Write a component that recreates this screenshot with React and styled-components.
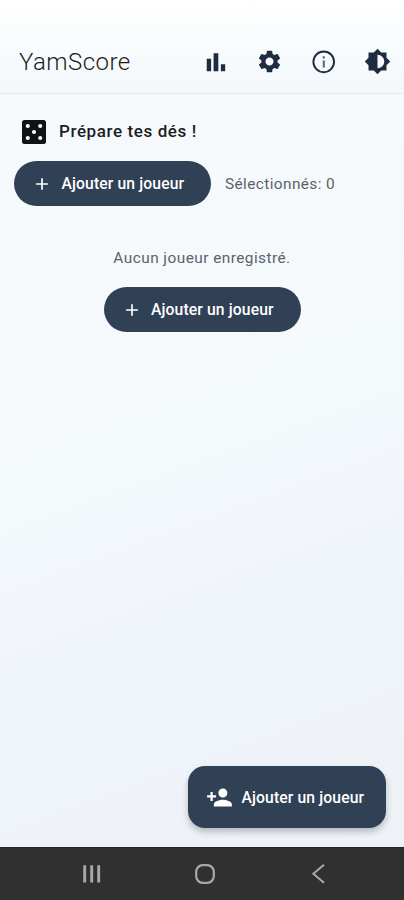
import React from 'react';
import styled, { createGlobalStyle } from 'styled-components';
import { MdAdd, MdBrightness6, MdPersonAdd, MdSettings } from 'react-icons/md';

const COLORS = {
    primary: '#304055',
    icon: '#1e2c40',
    text: '#1b1e23',
    muted: '#5d6267',
    navbar: '#303031',
    navIcon: '#a9a9aa',
};

const App = () => {
    return (
        <Screen>
            <GlobalStyle />
            <Header>
                <Title>YamScore</Title>
                <Actions>
                    <IconButton aria-label='Statistiques'>
                        <BarsIcon />
                    </IconButton>
                    <IconButton aria-label='Paramètres'>
                        <MdSettings />
                    </IconButton>
                    <IconButton aria-label='Informations'>
                        <InfoIcon />
                    </IconButton>
                    <IconButton aria-label='Thème'>
                        <MdBrightness6 />
                    </IconButton>
                </Actions>
            </Header>
            <Main>
                <Heading>
                    <DiceIcon />
                    <HeadingText>Prépare tes dés !</HeadingText>
                </Heading>
                <Toolbar>
                    <AddPlayer />
                    <Selected>Sélectionnés: 0</Selected>
                </Toolbar>
                <Empty>
                    <EmptyText>Aucun joueur enregistré.</EmptyText>
                    <AddPlayer />
                </Empty>
                <FloatingButton>
                    <MdPersonAdd />
                    <ButtonLabel>Ajouter un joueur</ButtonLabel>
                </FloatingButton>
            </Main>
            <NavBar>
                <NavItem>
                    <svg width='20' height='20' viewBox='0 0 20 20'>
                        <path d='M3.7 1.3v17.2M10.7 1.3v17.2M17.7 1.3v17.2' stroke='currentColor' strokeWidth='2.9' />
                    </svg>
                </NavItem>
                <NavItem>
                    <svg width='20' height='20' viewBox='0 0 20 20'>
                        <rect x='1.2' y='1.2' width='17.6' height='17.6' rx='6.5' fill='none' stroke='currentColor' strokeWidth='2.2' />
                    </svg>
                </NavItem>
                <NavItem>
                    <svg width='20' height='20' viewBox='0 0 20 20'>
                        <path d='M15 .8L4.3 9.7 15 18.8' fill='none' stroke='currentColor' strokeWidth='2' />
                    </svg>
                </NavItem>
            </NavBar>
        </Screen>
    )
};

const AddPlayer = () => (
    <PillButton>
        <MdAdd />
        <ButtonLabel>Ajouter un joueur</ButtonLabel>
    </PillButton>
);

const BarsIcon = () => (
    <svg viewBox='0 0 24 24' fill='currentColor'>
        <path d='M4.2 9.6h3.9V20.6H4.2zM10.3 4.6h4.2v16h-4.2zM16.8 14.4h3.8v6.2h-3.8z' />
    </svg>
);

const InfoIcon = () => (
    <svg viewBox='0 0 24 24' fill='currentColor'>
        <circle cx='12.2' cy='12.3' r='9.2' fill='none' stroke='currentColor' strokeWidth='1.7' />
        <path d='M11.3 7.3h1.9v2h-1.9zM11.3 11.2h1.9v6.1h-1.9z' opacity='0.7' />
    </svg>
);

const DiceIcon = () => (
    <svg width='24' height='24' viewBox='0 0 24 24'>
        <rect width='24' height='24' rx='2.5' fill='#111214' />
        <g fill='#f7f9fc'>
            <circle cx='5.8' cy='6' r='2.1' />
            <circle cx='18.2' cy='6' r='2.1' />
            <circle cx='12' cy='12' r='2.1' />
            <circle cx='5.8' cy='18' r='2.1' />
            <circle cx='18.2' cy='18' r='2.1' />
        </g>
    </svg>
);

const GlobalStyle = createGlobalStyle`
    * {
        box-sizing: border-box;
    }

    body {
        margin: 0;
        font-family: Roboto, 'Liberation Sans', sans-serif;
    }

    button {
        font-family: inherit;
        border: none;
        cursor: pointer;
    }

    svg {
        display: block;
        flex-shrink: 0;
    }
`;

const Screen = styled.div`
    display: flex;
    flex-direction: column;
    height: 900px;
    overflow: hidden;
    color: ${COLORS.text};
    background: linear-gradient(160deg, #f8fafd 0%, #f4f9fc 50%, #f0f4fb 66%, #eff3fa 78%, #eef2f6 90%, #eff3f8 100%);
`;

const Header = styled.header`
    display: flex;
    justify-content: space-between;
    align-items: flex-end;
    height: 94px;
    padding: 0 0 4px 19px;
    border-bottom: 1px solid #e3e9ed;
    background: linear-gradient(180deg, #ffffff 0%, #f3f8fb 100%);
`;

const Title = styled.h1`
    margin: 0;
    font-size: 24px;
    font-weight: 300;
    line-height: 54px;
    letter-spacing: 0.45px;
`;

const Actions = styled.div`
    display: flex;
    padding-bottom: 1px;
`;

const IconButton = styled.button`
    display: grid;
    place-items: center;
    width: 54px;
    height: 54px;
    padding: 0;
    color: ${COLORS.icon};
    background: transparent;

    svg {
        width: 27px;
        height: 27px;
    }
`;

const Main = styled.main`
    display: flex;
    flex-direction: column;
    flex: 1;
    padding: 26px 18px 19px 14px;
`;

const Heading = styled.div`
    display: flex;
    align-items: center;
    gap: 13px;
    height: 24px;
    padding-left: 8px;
`;

const HeadingText = styled.h2`
    margin: 0;
    padding-bottom: 2px;
    font-size: 17px;
    font-weight: 500;
    letter-spacing: 0.6px;
`;

const Toolbar = styled.div`
    display: flex;
    align-items: center;
    gap: 14px;
    margin-top: 17px;
`;

const PillButton = styled.button`
    display: flex;
    align-items: center;
    gap: 9.5px;
    width: 197px;
    height: 45px;
    padding: 0 0 0 18px;
    border-radius: 23px;
    color: #fff;
    background: ${COLORS.primary};

    svg {
        width: 20px;
        height: 20px;
    }
`;

const ButtonLabel = styled.span`
    font-size: 15.7px;
    font-weight: 500;
    letter-spacing: 0.12px;
    white-space: nowrap;
`;

const Selected = styled.span`
    font-size: 15.4px;
    letter-spacing: 0.4px;
    color: ${COLORS.muted};
`;

const Empty = styled.div`
    display: flex;
    flex-direction: column;
    align-items: center;
    gap: 19px;
    margin-top: 42px;
    padding-left: 4px;
`;

const EmptyText = styled.p`
    margin: 0;
    font-size: 15.4px;
    line-height: 20px;
    letter-spacing: 0.45px;
    color: ${COLORS.muted};
`;

const FloatingButton = styled.button`
    display: flex;
    align-items: center;
    align-self: flex-end;
    gap: 8.5px;
    width: 198px;
    height: 62px;
    margin-top: auto;
    padding: 0 0 0 18px;
    border-radius: 17px;
    color: #fff;
    background: ${COLORS.primary};
    box-shadow: 0 4px 6px rgba(40, 45, 70, 0.28);

    svg {
        width: 27px;
        height: 27px;
    }
`;

const NavBar = styled.nav`
    display: flex;
    justify-content: center;
    align-items: center;
    gap: 94px;
    height: 53px;
    padding-left: 6px;
    border-top: 1px solid #22272c;
    color: ${COLORS.navIcon};
    background: ${COLORS.navbar};
`;

const NavItem = styled.div`
    width: 20px;
    height: 20px;
`;

export default App;
